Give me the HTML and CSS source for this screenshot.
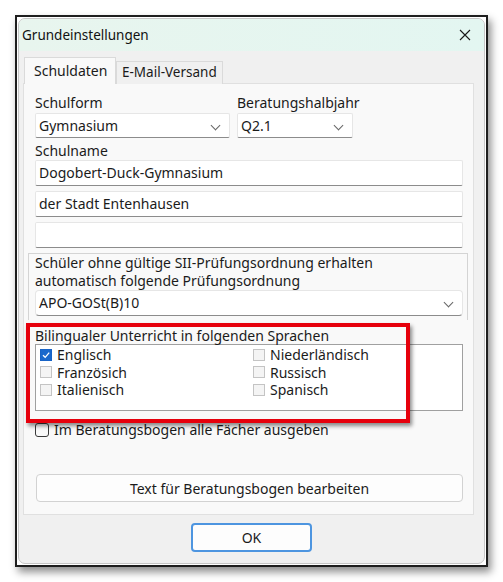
FILE: index.html
```html
<!DOCTYPE html>
<html lang="de">
<head>
  <meta charset="UTF-8">
  <title>Grundeinstellungen</title>
  <link rel="stylesheet" href="styles.css">
</head>
<body>
  <div class="window">
    <div class="frame">
      <div class="titlebar">
        <span class="title">Grundeinstellungen</span>
        <svg class="close" width="12" height="12" viewBox="0 0 12 12">
          <path d="M1 1L11 11M11 1L1 11" stroke="#1a1a1a" stroke-width="1.1" fill="none"/>
        </svg>
      </div>

      <div class="tabs">
        <div class="tab active">Schuldaten</div>
        <div class="tab">E-Mail-Versand</div>
      </div>

      <div class="panel">
        <div class="row-top">
          <div class="field">
            <label>Schulform</label>
            <div class="combo">Gymnasium<span class="arrow"></span></div>
          </div>
          <div class="field">
            <label>Beratungshalbjahr</label>
            <div class="combo">Q2.1<span class="arrow"></span></div>
          </div>
        </div>

        <label class="label-name">Schulname</label>
        <div class="input">Dogobert-Duck-Gymnasium</div>
        <div class="input">der Stadt Entenhausen</div>
        <div class="input"></div>

        <div class="groupbox">
          <p>Schüler ohne gültige SII-Prüfungsordnung erhalten<br>automatisch folgende Prüfungsordnung</p>
          <div class="combo">APO-GOSt(B)10<span class="arrow"></span></div>
        </div>

        <label class="label-bili">Bilingualer Unterricht in folgenden Sprachen</label>
        <div class="listbox">
          <div class="item"><span class="box checked"></span>Englisch</div>
          <div class="item"><span class="box"></span>Niederländisch</div>
          <div class="item"><span class="box"></span>Französich</div>
          <div class="item"><span class="box"></span>Russisch</div>
          <div class="item"><span class="box"></span>Italienisch</div>
          <div class="item"><span class="box"></span>Spanisch</div>
        </div>

        <div class="check-all"><span class="tick"></span>Im Beratungsbogen alle Fächer ausgeben</div>

        <button class="btn-wide">Text für Beratungsbogen bearbeiten</button>

        <div class="marker"></div>
      </div>

      <div class="footer">
        <button class="btn-ok">OK</button>
      </div>
    </div>
  </div>
</body>
</html>
```

FILE: styles.css
```css
* {
  box-sizing: border-box;
}
body {
  margin: 0;
  padding: 15px;
  background: #fff;
  font-family: "Noto Sans", sans-serif;
  font-size: 14px;
  color: #1b1b1b;
}
.window {
  width: 473px;
  height: 552px;
  border: 2px solid #1e1e1e;
  padding: 1px;
  background: #fff;
  box-shadow: 3px 5px 8px rgba(0,0,0,0.45);
}
.frame {
  height: 100%;
  border: 1px solid #c6c6c6;
  border-radius: 7px;
  background: #f0f0f0;
  overflow: hidden;
}
.titlebar {
  height: 32px;
  display: flex;
  align-items: center;
  justify-content: space-between;
  padding: 0 13px 0 3px;
  background: linear-gradient(90deg, #e8f5ee, #e3f6f1);
}
.title {
  font-size: 13.5px;
  color: #111;
}
.tabs {
  display: flex;
  align-items: flex-end;
  margin: 6px 0 0 5px;
  position: relative;
  z-index: 1;
}
.tab {
  height: 23px;
  padding: 0 5px 0 5px;
  line-height: 21px;
  border: 1px solid #dadada;
  border-bottom: none;
  background: #f0f0f0;
  font-size: 13.5px;
}
.tab.active {
  height: 27px;
  width: 92px;
  padding-left: 9px;
  line-height: 25px;
  background: #f9f9f9;
  font-size: 14px;
}
.panel {
  position: relative;
  margin-left: 4px;
  margin-top: -1px;
  width: 451px;
  height: 432px;
  border: 1px solid #e0e0e0;
  background: #f9f9f9;
  padding: 10px 10px 0 11px;
}
label {
  display: block;
  line-height: 18px;
}
.row-top {
  display: grid;
  grid-template-columns: 195px 116px;
  column-gap: 7px;
}
.combo, .input {
  position: relative;
  height: 26px;
  background: #fff;
  border: 1px solid #e6e6e6;
  border-bottom-color: #8c8c8c;
  border-radius: 2px;
  padding-left: 3px;
  line-height: 23px;
}
.row-top .combo {
  margin-top: 1px;
  height: 25px;
}
.arrow {
  position: absolute;
  right: 10px;
  top: 8px;
  width: 7px;
  height: 7px;
  border-right: 1px solid #666;
  border-bottom: 1px solid #666;
  transform: rotate(45deg);
}
.label-name {
  margin-top: 4px;
}
.input + .input {
  margin-top: 5px;
}
.input:last-of-type {
  margin-top: 6px;
}
.groupbox {
  margin: 5px -5px 0 -7px;
  height: 67px;
  border: 1px solid #d4d4d4;
  border-bottom: none;
  padding: 0 4px 0 6px;
}
.groupbox p {
  margin: 0;
  line-height: 18px;
}
.groupbox .combo {
  border-radius: 4px;
}
.label-bili {
  margin-top: 7px;
  line-height: 17px;
}
.listbox {
  height: 67px;
  background: #fff;
  border: 1px solid #a0a0a0;
  padding: 1px 0 0 4px;
  display: grid;
  grid-template-columns: 213px 1fr;
  grid-auto-rows: 17.5px;
}
.item {
  display: flex;
  align-items: center;
  line-height: 17px;
}
.box {
  width: 12px;
  height: 12px;
  margin-right: 5px;
  border: 1px solid #c4c4c4;
  background: #f4f4f4;
}
.box.checked {
  border-color: #1763c6;
  background: #1a68cc url("data:image/svg+xml,%3Csvg xmlns='http://www.w3.org/2000/svg' viewBox='0 0 10 10'%3E%3Cpath d='M2 5.2L4.2 7.3L8.2 2.6' stroke='white' stroke-width='1.3' fill='none'/%3E%3C/svg%3E") center / 10px 10px no-repeat;
}
.check-all {
  display: flex;
  align-items: center;
  margin-top: 10px;
  line-height: 17px;
}
.tick {
  width: 14px;
  height: 14px;
  margin-right: 5px;
  border: 1px solid #3a3a3a;
  border-radius: 3px;
}
.btn-wide {
  display: block;
  width: 427px;
  height: 28px;
  margin: 36px 0 0 1px;
  background: #fdfdfd;
  border: 1px solid #d2d2d2;
  border-radius: 4px;
  font-family: inherit;
  font-size: 14px;
  color: #1b1b1b;
}
/* Rahmen zur Hervorhebung über den Sprachen */
.marker {
  position: absolute;
  left: 2px;
  top: 239px;
  width: 384px;
  height: 100px;
  border: 4px solid #e6000c;
  box-shadow: 2px 3px 4px rgba(0,0,0,0.45);
  pointer-events: none;
}
.footer {
  display: flex;
  justify-content: center;
  padding-top: 8px;
}
.btn-ok {
  width: 121px;
  height: 29px;
  background: #fdfdfd;
  border: 2px solid #4d95e0;
  border-radius: 4px;
  font-family: inherit;
  font-size: 14px;
  color: #1b1b1b;
}
```
